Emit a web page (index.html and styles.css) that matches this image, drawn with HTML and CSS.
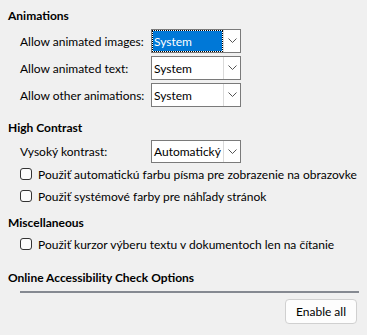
FILE: index.html
```html
<!DOCTYPE html>
<html lang="sk">
<head>
    <meta charset="UTF-8">
    <meta name="viewport" content="width=device-width, initial-scale=1.0">
    <title>Accessibility</title>
    <link rel="stylesheet" href="styles.css">
</head>
<body>
    <div class="page">
        <div class="heading first">Animations</div>
        <div class="rows">
            <div class="row">
                <span class="label">Allow animated images:</span>
                <div class="combo focused">
                    <span class="value"><span class="sel">System</span></span>
                    <span class="arrow"><svg width="9" height="6" viewBox="0 0 9 6"><path d="M0.5 0.5 L4.5 4.5 L8.5 0.5" fill="none" stroke="#555" stroke-width="1"/></svg></span>
                </div>
            </div>
            <div class="row">
                <span class="label">Allow animated text:</span>
                <div class="combo">
                    <span class="value">System</span>
                    <span class="arrow"><svg width="9" height="6" viewBox="0 0 9 6"><path d="M0.5 0.5 L4.5 4.5 L8.5 0.5" fill="none" stroke="#555" stroke-width="1"/></svg></span>
                </div>
            </div>
            <div class="row">
                <span class="label">Allow other animations:</span>
                <div class="combo">
                    <span class="value">System</span>
                    <span class="arrow"><svg width="9" height="6" viewBox="0 0 9 6"><path d="M0.5 0.5 L4.5 4.5 L8.5 0.5" fill="none" stroke="#555" stroke-width="1"/></svg></span>
                </div>
            </div>
        </div>

        <div class="heading contrast">High Contrast</div>
        <div class="row single">
            <span class="label">Vysoký kontrast:</span>
            <div class="combo short">
                <span class="value">Automatický</span>
                <span class="arrow"><svg width="9" height="6" viewBox="0 0 9 6"><path d="M0.5 0.5 L4.5 4.5 L8.5 0.5" fill="none" stroke="#555" stroke-width="1"/></svg></span>
            </div>
        </div>
        <div class="check"><span class="box"></span>Použiť automatickú farbu písma pre zobrazenie na obrazovke</div>
        <div class="check"><span class="box"></span>Použiť systémové farby pre náhľady stránok</div>

        <div class="heading misc">Miscellaneous</div>
        <div class="check"><span class="box"></span>Použiť kurzor výberu textu v dokumentoch len na čítanie</div>

        <div class="heading online">Online Accessibility Check Options</div>
        <div class="separator"></div>
        <div class="actions">
            <button class="btn">Enable all</button>
        </div>
    </div>
</body>
</html>
```

FILE: styles.css
```css
body {
    margin: 0;
    background-color: #f0f0f0;
    font-family: Lato, "Noto Sans", sans-serif;
    font-size: 12px;
    color: #000;
}
.page {
    width: 367px;
    height: 335px;
    overflow: hidden;
    white-space: nowrap;
}
.heading {
    font-weight: bold;
    height: 16px;
    line-height: 16px;
    padding-left: 8px;
}
.first {
    margin-top: 8px;
}
.contrast {
    margin-top: 13px;
}
.misc {
    margin-top: 8px;
}
.online {
    margin-top: 15px;
}
.rows {
    display: flex;
    flex-direction: column;
    gap: 3px;
    margin-top: 5px;
}
.row {
    display: flex;
    align-items: center;
    padding-left: 20px;
}
.row.single {
    margin-top: 4px;
}
.label {
    width: 131px;
    flex-shrink: 0;
}
.combo {
    display: flex;
    width: 88px;
    height: 22px;
    border: 1px solid #7a7a7a;
    background-color: #fff;
}
.combo.short {
    height: 21px;
}
.value {
    flex: 1;
    display: flex;
    align-items: center;
    padding-left: 2px;
}
.focused .value {
    padding: 1px;
}
.sel {
    flex: 1;
    align-self: stretch;
    display: flex;
    align-items: center;
    padding-left: 1px;
    background-color: #0078d7;
    color: #fff;
    outline: 1px dotted #000;
}
.arrow {
    width: 16px;
    border-left: 1px solid #dadada;
    display: flex;
    align-items: center;
    justify-content: center;
}
.check {
    display: flex;
    align-items: center;
    height: 22px;
    padding-left: 20px;
}
.misc + .check {
    margin-top: 2px;
}
.box {
    flex-shrink: 0;
    width: 10px;
    height: 10px;
    border: 1px solid #333;
    border-radius: 3px;
    background-color: #fbfbfb;
    margin-right: 6px;
}
.separator {
    height: 2px;
    margin: 5px 8px 0 20px;
    background-color: #858991;
}
.actions {
    display: flex;
    justify-content: flex-end;
    padding-right: 10px;
    margin-top: 6px;
}
.btn {
    width: 72px;
    height: 25px;
    font-family: Lato, "Noto Sans", sans-serif;
    font-size: 12px;
    background-color: #fdfdfd;
    border: 1px solid #d0d0d0;
    border-radius: 4px;
    color: #000;
    padding: 0;
}
```
